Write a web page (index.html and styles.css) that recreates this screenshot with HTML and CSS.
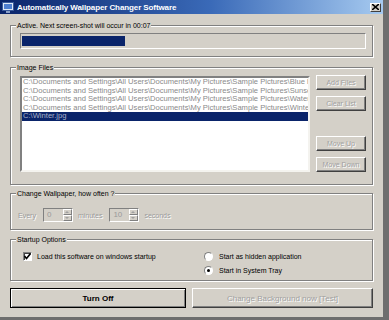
FILE: index.html
```html
<!DOCTYPE html>
<html lang="en">

<head>
    <meta charset="UTF-8">
    <title>Automatically Wallpaper Changer Software</title>
    <link rel="stylesheet" href="styles.css">
</head>

<body>
    <div class="win">
        <div class="titlebar">
            <svg class="app-icon" width="12" height="11" viewBox="0 0 12 11">
                <rect x="0.5" y="0.5" width="11" height="8" fill="#dfe8f6" stroke="#3a5a9a"/>
                <rect x="2" y="2" width="8" height="5" fill="#4f7fd0"/>
                <rect x="4" y="9" width="4" height="2" fill="#8aa0c8"/>
            </svg>
            <span class="title">Automatically Wallpaper Changer Software</span>
            <span class="close-btn">
                <svg width="7" height="6" viewBox="0 0 7 6">
                    <path d="M0 0 L7 6 M7 0 L0 6" stroke="#000" stroke-width="1.6"/>
                </svg>
            </span>
        </div>

        <div class="content">
            <fieldset class="group status">
                <legend>Active. Next screen-shot will occur in 00:07</legend>
                <div class="progress">
                    <div class="progress-fill" style="width: 30%"></div>
                </div>
            </fieldset>

            <fieldset class="group files">
                <legend>Image Files</legend>
                <div class="files-row">
                    <ul class="listbox">
                        <li>C:\Documents and Settings\All Users\Documents\My Pictures\Sample Pictures\Blue hills.jpg</li>
                        <li>C:\Documents and Settings\All Users\Documents\My Pictures\Sample Pictures\Sunset.jpg</li>
                        <li>C:\Documents and Settings\All Users\Documents\My Pictures\Sample Pictures\Water lilies.jpg</li>
                        <li>C:\Documents and Settings\All Users\Documents\My Pictures\Sample Pictures\Winter.jpg</li>
                        <li class="selected">C:\Winter.jpg</li>
                    </ul>
                    <div class="side-buttons">
                        <button class="btn small" disabled>Add Files</button>
                        <button class="btn small" disabled>Clear List</button>
                        <button class="btn small gap" disabled>Move Up</button>
                        <button class="btn small" disabled>Move Down</button>
                    </div>
                </div>
            </fieldset>

            <fieldset class="group often">
                <legend>Change Wallpaper, how often ?</legend>
                <div class="often-row">
                    <span class="dim">Every</span>
                    <span class="spin">
                        <span class="spin-val">0</span>
                        <span class="spin-arrows"><i class="up"></i><i class="down"></i></span>
                    </span>
                    <span class="dim">minutes</span>
                    <span class="spin">
                        <span class="spin-val">10</span>
                        <span class="spin-arrows"><i class="up"></i><i class="down"></i></span>
                    </span>
                    <span class="dim">seconds</span>
                </div>
            </fieldset>

            <fieldset class="group startup">
                <legend>Startup Options</legend>
                <div class="startup-row">
                    <div class="opt-col">
                        <label class="opt"><span class="check">
                            <svg width="7" height="7" viewBox="0 0 7 7"><path d="M0.5 3 L2.5 5.5 L6.5 0.5" fill="none" stroke="#000" stroke-width="1.6"/></svg>
                        </span>Load this software on windows startup</label>
                    </div>
                    <div class="opt-col radios">
                        <label class="opt"><span class="radio"></span>Start as hidden application</label>
                        <label class="opt"><span class="radio on"></span>Start in System Tray</label>
                    </div>
                </div>
            </fieldset>

            <div class="actions">
                <button class="btn big default">Turn Off</button>
                <button class="btn big" disabled>Change Background now [Test]</button>
            </div>
        </div>
    </div>
</body>

</html>
```

FILE: styles.css
```css
body {
    margin: 0;
    background-color: #6e6e6e;
    font-family: "Liberation Sans", Arial, sans-serif;
    font-size: 7px;
    color: #000;
}

.win {
    width: 383px;
    height: 317px;
    background-color: #d4d0c8;
    overflow: hidden;
}

.titlebar {
    height: 14px;
    display: flex;
    align-items: center;
    padding: 0 2px;
    background: linear-gradient(to right, #0a246a, #3a6ab8 55%, #a6caf0);
}

.app-icon {
    margin-right: 3px;
}

.title {
    flex: 1;
    color: #fff;
    font-weight: bold;
    font-size: 8px;
    letter-spacing: -0.1px;
}

.close-btn {
    width: 11px;
    height: 9px;
    display: flex;
    align-items: center;
    justify-content: center;
    background: #d4d0c8;
    border-top: 1px solid #fff;
    border-left: 1px solid #fff;
    border-right: 1px solid #404040;
    border-bottom: 1px solid #404040;
    box-sizing: border-box;
}

.content {
    padding: 0 10px;
}

/* group boxes */
.group {
    margin: 0;
    padding: 0 6px 0 9px;
    border: 1px solid #808080;
    box-shadow: 1px 1px 0 #fff, inset 1px 1px 0 #fff;
    min-width: 0;
}

.group legend {
    padding: 0 1px;
    margin-left: -4px;
    line-height: 9px;
    background-color: #d4d0c8;
}

.status {
    margin-top: 7px;
    padding-top: 3px;
    padding-bottom: 7px;
}

.progress {
    height: 16px;
    border-top: 1px solid #808080;
    border-left: 1px solid #808080;
    border-right: 1px solid #fff;
    border-bottom: 1px solid #fff;
    box-sizing: border-box;
    padding: 2px 1px;
}

.progress-fill {
    height: 100%;
    background-color: #0a246a;
}

.files {
    margin-top: 6px;
    padding-top: 4px;
    padding-bottom: 12px;
}

.files-row {
    display: flex;
    gap: 6px;
}

.listbox {
    list-style: none;
    margin: 0;
    padding: 0;
    width: 290px;
    flex-shrink: 0;
    height: 96px;
    box-sizing: border-box;
    background-color: #fff;
    border-top: 2px solid #808080;
    border-left: 2px solid #808080;
    border-right: 2px solid #f4f3ef;
    border-bottom: 2px solid #f4f3ef;
    overflow: hidden;
}

.listbox li {
    white-space: nowrap;
    overflow: hidden;
    line-height: 8.5px;
    font-size: 7.6px;
    color: #8a8a8a;
    padding-left: 1px;
}

.listbox li.selected {
    background-color: #0a246a;
    color: #a9b0c8;
}

.side-buttons {
    display: flex;
    flex-direction: column;
    gap: 6px;
    margin-top: -1px;
}

.btn {
    font-family: "Liberation Sans", Arial, sans-serif;
    background-color: #d4d0c8;
    border-top: 1px solid #fff;
    border-left: 1px solid #fff;
    border-right: 1px solid #404040;
    border-bottom: 1px solid #404040;
    box-shadow: inset -1px -1px 0 #808080;
    padding: 0;
    box-sizing: border-box;
    color: #000;
}

.btn:disabled {
    color: #a0a0a0;
    text-shadow: 1px 1px 0 #fff;
}

.btn.small {
    width: 50px;
    height: 15px;
    font-size: 7px;
}

.btn.small.gap {
    margin-top: 19px;
}

.often {
    margin-top: 4px;
    padding-top: 10px;
    padding-bottom: 7px;
}

.often-row {
    display: flex;
    align-items: center;
    height: 14px;
}

.often-row .dim:first-child {
    margin-left: -2px;
}

.dim {
    color: #9a9a9a;
    text-shadow: 1px 1px 0 #fff;
}

.spin {
    display: flex;
    width: 30px;
    height: 14px;
    box-sizing: border-box;
    border-top: 1px solid #808080;
    border-left: 1px solid #808080;
    border-right: 1px solid #fff;
    border-bottom: 1px solid #fff;
    margin: 0 5px 0 7px;
    background-color: #d4d0c8;
}

.spin-val {
    flex: 1;
    color: #9a9a9a;
    padding-left: 3px;
    line-height: 12px;
    font-size: 8px;
}

.spin-arrows {
    width: 9px;
    display: flex;
    flex-direction: column;
}

.spin-arrows i {
    flex: 1;
    border-top: 1px solid #fff;
    border-left: 1px solid #fff;
    border-right: 1px solid #808080;
    border-bottom: 1px solid #808080;
    position: relative;
}

.spin-arrows i::after {
    content: "";
    position: absolute;
    left: 1px;
    top: 1px;
    border-left: 2px solid transparent;
    border-right: 2px solid transparent;
}

.spin-arrows .up::after {
    border-bottom: 2px solid #a0a0a0;
}

.spin-arrows .down::after {
    border-top: 2px solid #a0a0a0;
}

.startup {
    margin-top: 5px;
    padding-top: 5px;
    padding-bottom: 3px;
}

.startup-row {
    display: flex;
}

.opt-col {
    display: flex;
    flex-direction: column;
}

.opt-col.radios {
    margin-left: auto;
    width: 162px;
}

.opt {
    display: flex;
    align-items: center;
    height: 14px;
    font-size: 7px;
}

.check {
    width: 9px;
    height: 9px;
    box-sizing: border-box;
    margin: 0 5px 0 3px;
    background-color: #fff;
    border-top: 1px solid #808080;
    border-left: 1px solid #808080;
    border-right: 1px solid #fff;
    border-bottom: 1px solid #fff;
    box-shadow: inset 1px 1px 0 #404040;
    display: flex;
    align-items: center;
    justify-content: center;
}

.radio {
    width: 9px;
    height: 9px;
    box-sizing: border-box;
    border-radius: 50%;
    margin-right: 6px;
    background-color: #fff;
    border: 1px solid;
    border-color: #808080 #fff #fff #808080;
    display: flex;
    align-items: center;
    justify-content: center;
}

.radio.on::after {
    content: "";
    width: 3px;
    height: 3px;
    border-radius: 50%;
    background-color: #000;
}

.actions {
    display: flex;
    gap: 6px;
    margin-top: 7px;
}

.btn.big {
    height: 20px;
    font-size: 8px;
}

.btn.big.default {
    width: 176px;
    font-weight: bold;
    border: 1px solid #000;
    box-shadow: inset 1px 1px 0 #fff, inset -1px -1px 0 #808080;
}

.btn.big:disabled {
    flex: 1;
}
```
